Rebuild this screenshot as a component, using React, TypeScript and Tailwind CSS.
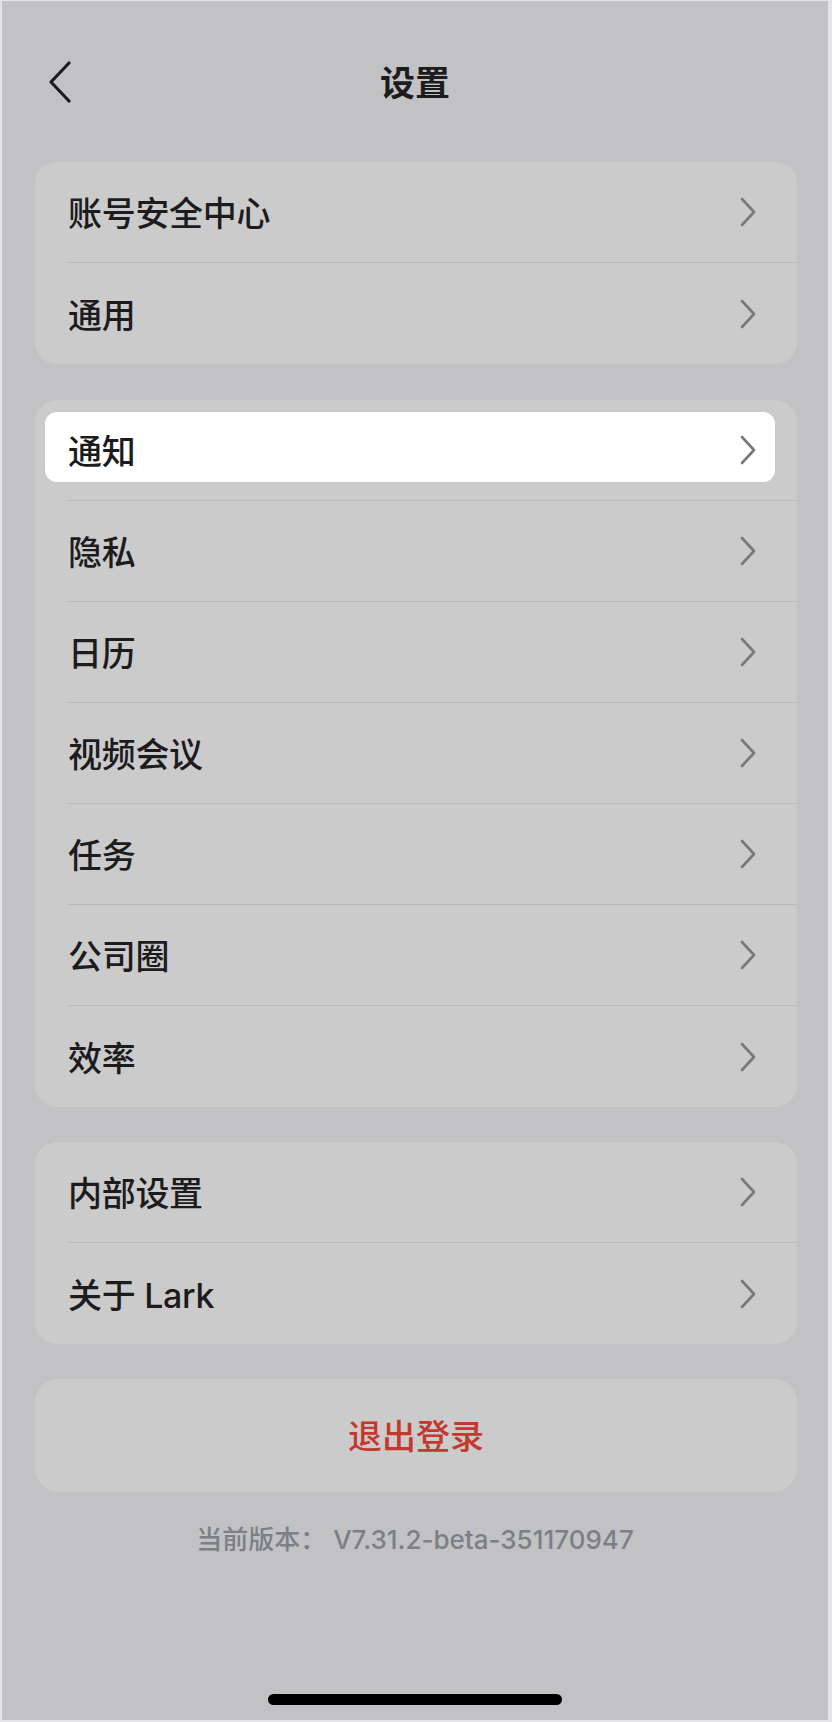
import React from "react";

const font = {
  fontFamily: '"Inter", "Noto Sans CJK SC", sans-serif',
};

function Chevron() {
  return (
    <svg width="16" height="30" viewBox="0 0 16 30" fill="none">
      <path d="M2 2 L14 15 L2 28" stroke="#76787d" strokeWidth="2.6" strokeLinecap="round" strokeLinejoin="round" />
    </svg>
  );
}

type RowProps = { label: string; last?: boolean; highlight?: boolean };

function Row({ label, last, highlight }: RowProps) {
  return (
    <div className="relative h-[101px]">
      {highlight && <div className="absolute left-[10px] right-[22px] top-[12px] h-[70px] rounded-[12px] bg-white" />}
      <div
        className={`relative ml-[33px] flex h-full items-center justify-between pr-[41px] ${
          last ? "" : "border-b border-[#b9b9bb]"
        }`}
      >
        <span className="pt-[4px] text-[34px] font-medium leading-none tracking-[-0.3px] text-[#1c1c1e]">{label}</span>
        <Chevron />
      </div>
    </div>
  );
}

function Card({ items, highlightFirst }: { items: string[]; highlightFirst?: boolean }) {
  return (
    <div className="ml-[33px] mr-[31px] rounded-[22px] bg-[#cbcbcb]">
      {items.map((label, i) => (
        <Row key={label} label={label} last={i === items.length - 1} highlight={highlightFirst && i === 0} />
      ))}
    </div>
  );
}

export default function App() {
  return (
    <div
      style={font}
      className="flex h-[1722px] w-[832px] flex-col border-t border-r-4 border-b-2 border-l-2 border-[#e4e4e6] bg-[#c2c2c4]"
    >
      <header className="relative flex h-[161px] shrink-0 items-center justify-center">
        <svg className="absolute left-[46px] top-[60px]" width="24" height="42" viewBox="0 0 24 42" fill="none">
          <path d="M21 2 L3 21 L21 40" stroke="#1c1c1e" strokeWidth="3.2" strokeLinecap="round" strokeLinejoin="round" />
        </svg>
        <h1 className="pt-[4px] text-[35px] font-semibold leading-none text-[#1c1c1e]">设置</h1>
      </header>

      <Card items={["账号安全中心", "通用"]} />
      <div className="h-[36px] shrink-0" />
      <Card items={["通知", "隐私", "日历", "视频会议", "任务", "公司圈", "效率"]} highlightFirst />
      <div className="h-[35px] shrink-0" />
      <Card items={["内部设置", "关于 Lark"]} />

      <button className="mt-[35px] ml-[33px] mr-[31px] flex h-[113px] shrink-0 items-center justify-center rounded-[24px] bg-[#cbcbcb]">
        <span className="pt-[2px] text-[34px] font-medium leading-none text-[#c4382e]">退出登录</span>
      </button>

      <p className="mt-[30px] text-center text-[26px] font-medium leading-[36px] text-[#7c7f86]">
        当前版本：&nbsp;V7.31.2-beta-351170947
      </p>

      <div className="mt-auto mb-[15px] flex justify-center">
        <div className="h-[11px] w-[294px] rounded-full bg-black" />
      </div>
    </div>
  );
}
